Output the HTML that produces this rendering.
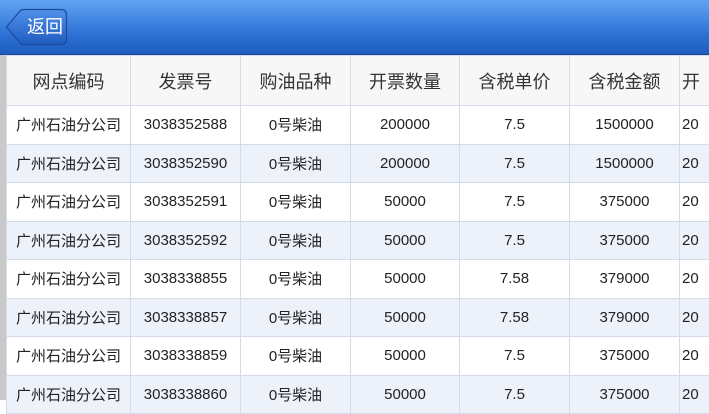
<!DOCTYPE html><html><head><meta charset="utf-8"><style>
body{margin:0;width:709px;height:400px;overflow:hidden;background:#fff;font-family:"Liberation Sans","Noto Sans CJK SC",sans-serif;position:relative}
.bar{position:absolute;left:0;top:0;width:709px;height:54px;background:linear-gradient(#62a4f4,#2f74d6 60%,#1d5cbf);border-bottom:1px solid #17479a}
.btn{position:absolute;left:5px;top:8px;width:63px;height:38px}
.btn span{position:absolute;left:18px;top:0;width:44px;line-height:38px;color:#fff;font-size:18px;text-align:center}
.strip{position:absolute;left:0;top:55px;width:6px;height:345px;background:#c9c9c9}
table{position:absolute;left:6px;top:55px;width:713px;border-collapse:collapse;table-layout:fixed}
td{border:1px solid #d3dbe8;text-align:center;color:#222;font-size:15px;height:37.5px;padding:0;white-space:nowrap;overflow:hidden}
tr.h td{height:49px;font-size:18px;color:#333;background:#f7f7f7}
tr:nth-child(odd):not(.h) td{background:#edf1fa}
td.l{text-align:left;padding-left:2px}
</style></head><body>
<div class="bar"><div class="btn"><svg width="63" height="38" viewBox="0 0 63 38"><defs><linearGradient id="g" x1="0" y1="0" x2="0" y2="1"><stop offset="0" stop-color="#5090ea"/><stop offset="1" stop-color="#1f5cc0"/></linearGradient></defs><path d="M1.5 19 L15 3 Q16.5 1.5 19 1.5 L56 1.5 Q61.5 1.5 61.5 7 L61.5 31 Q61.5 36.5 56 36.5 L19 36.5 Q16.5 36.5 15 35 Z" fill="url(#g)" stroke="#1a4c9e" stroke-width="1.2"/></svg><span>返回</span></div></div>
<div class="strip"></div>
<table>
<colgroup><col style="width:124px"><col style="width:110px"><col style="width:110px"><col style="width:109px"><col style="width:110px"><col style="width:110px"><col style="width:40px"></colgroup>
<tr class="h"><td>网点编码</td><td>发票号</td><td>购油品种</td><td>开票数量</td><td>含税单价</td><td>含税金额</td><td class="l">开</td></tr>
<tr><td>广州石油分公司</td><td>3038352588</td><td>0号柴油</td><td>200000</td><td>7.5</td><td>1500000</td><td class="l">20</td></tr>
<tr><td>广州石油分公司</td><td>3038352590</td><td>0号柴油</td><td>200000</td><td>7.5</td><td>1500000</td><td class="l">20</td></tr>
<tr><td>广州石油分公司</td><td>3038352591</td><td>0号柴油</td><td>50000</td><td>7.5</td><td>375000</td><td class="l">20</td></tr>
<tr><td>广州石油分公司</td><td>3038352592</td><td>0号柴油</td><td>50000</td><td>7.5</td><td>375000</td><td class="l">20</td></tr>
<tr><td>广州石油分公司</td><td>3038338855</td><td>0号柴油</td><td>50000</td><td>7.58</td><td>379000</td><td class="l">20</td></tr>
<tr><td>广州石油分公司</td><td>3038338857</td><td>0号柴油</td><td>50000</td><td>7.58</td><td>379000</td><td class="l">20</td></tr>
<tr><td>广州石油分公司</td><td>3038338859</td><td>0号柴油</td><td>50000</td><td>7.5</td><td>375000</td><td class="l">20</td></tr>
<tr><td>广州石油分公司</td><td>3038338860</td><td>0号柴油</td><td>50000</td><td>7.5</td><td>375000</td><td class="l">20</td></tr>
</table>
</body></html>
